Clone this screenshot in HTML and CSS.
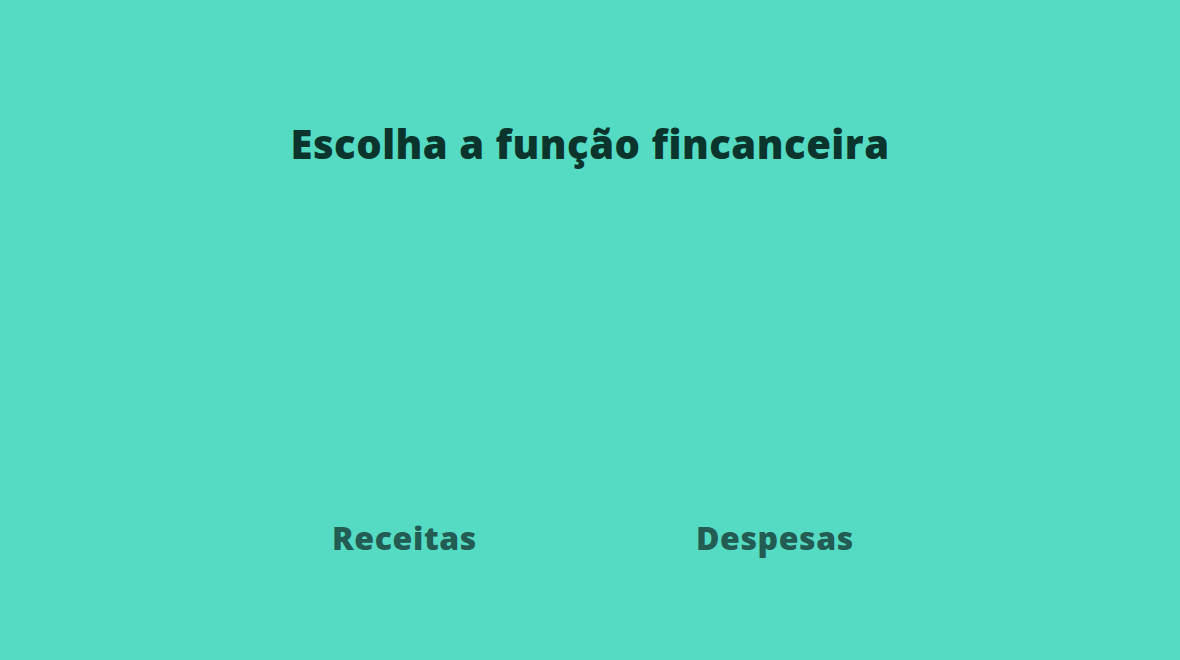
FILE: index.html
```html
<!DOCTYPE html>
<html lang="pt-BR">
<head>
<meta charset="utf-8">
<title>Escolha a função</title>
<link rel="stylesheet" href="styles.css">
</head>
<body>
<main class="page">
  <h1 class="title">Escolha a função fincanceira</h1>
  <div class="options">
    <a class="option" href="#receitas">
      <div class="option-pic"></div>
      <span class="option-label">Receitas</span>
    </a>
    <a class="option" href="#despesas">
      <div class="option-pic"></div>
      <span class="option-label">Despesas</span>
    </a>
  </div>
</main>
</body>
</html>
```
FILE: styles.css
```css
html, body {
  margin: 0;
  padding: 0;
  height: 100%;
}
body {
  background: #55dbc3;
  font-family: "Open Sans", "Liberation Sans", sans-serif;
}
.page {
  display: flex;
  flex-direction: column;
  align-items: center;
  padding-top: 116px;
}
.title {
  margin: 0;
  font-size: 40px;
  line-height: 56px;
  font-weight: 800;
  letter-spacing: 0.5px;
  color: #0b352c;
}
.options {
  display: flex;
  gap: 219px;
  margin-top: 344px;
  padding-left: 6px;
}
.option {
  display: flex;
  flex-direction: column;
  align-items: center;
  text-decoration: none;
}
.option-label {
  font-size: 32px;
  line-height: 44px;
  font-weight: 800;
  letter-spacing: 0.6px;
  color: #235c52;
}
```
